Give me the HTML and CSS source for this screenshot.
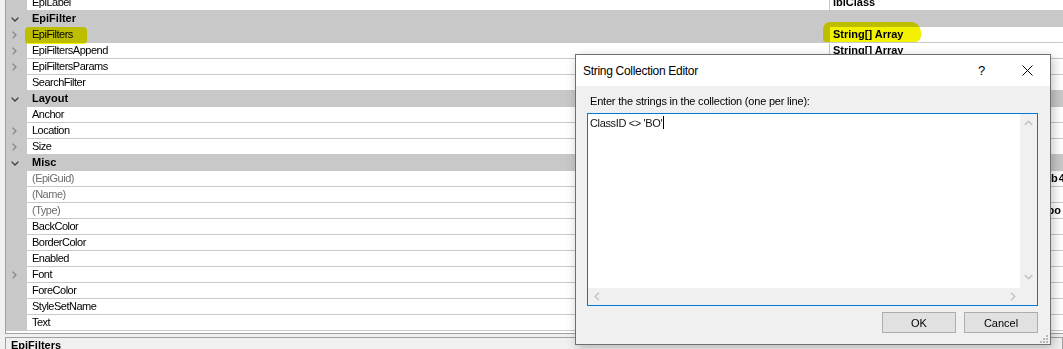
FILE: index.html
```html
<!DOCTYPE html>
<html lang="en">
<head>
    <meta charset="UTF-8">
    <meta name="viewport" content="width=device-width, initial-scale=1.0">
    <link rel="stylesheet" href="styles.css">
</head>
<body>
    <div class="props">
        <div class="grid">
            <div class="row"><div class="mg"></div><div class="name">EpiLabel</div><div class="val">lblClass</div></div>
            <div class="row cat"><div class="mg"><svg class="down" width="8" height="5" viewBox="0 0 8 5"><path d="M0.6 0.6 L4 4 L7.4 0.6"/></svg></div><div class="name">EpiFilter</div></div>
            <div class="row sel"><div class="mg"><svg class="right" width="5" height="8" viewBox="0 0 5 8"><path d="M0.6 0.6 L4 4 L0.6 7.4"/></svg></div><div class="name">EpiFilters</div><div class="val">String[] Array</div></div>
            <div class="row"><div class="mg"><svg class="right" width="5" height="8" viewBox="0 0 5 8"><path d="M0.6 0.6 L4 4 L0.6 7.4"/></svg></div><div class="name">EpiFiltersAppend</div><div class="val">String[] Array</div></div>
            <div class="row"><div class="mg"><svg class="right" width="5" height="8" viewBox="0 0 5 8"><path d="M0.6 0.6 L4 4 L0.6 7.4"/></svg></div><div class="name">EpiFiltersParams</div><div class="val">String[] Array</div></div>
            <div class="row"><div class="mg"></div><div class="name">SearchFilter</div><div class="val"></div></div>
            <div class="row cat"><div class="mg"><svg class="down" width="8" height="5" viewBox="0 0 8 5"><path d="M0.6 0.6 L4 4 L7.4 0.6"/></svg></div><div class="name">Layout</div></div>
            <div class="row"><div class="mg"></div><div class="name">Anchor</div><div class="val">Top, Left</div></div>
            <div class="row"><div class="mg"><svg class="right" width="5" height="8" viewBox="0 0 5 8"><path d="M0.6 0.6 L4 4 L0.6 7.4"/></svg></div><div class="name">Location</div><div class="val">12, 40</div></div>
            <div class="row"><div class="mg"><svg class="right" width="5" height="8" viewBox="0 0 5 8"><path d="M0.6 0.6 L4 4 L0.6 7.4"/></svg></div><div class="name">Size</div><div class="val">120, 20</div></div>
            <div class="row cat"><div class="mg"><svg class="down" width="8" height="5" viewBox="0 0 8 5"><path d="M0.6 0.6 L4 4 L7.4 0.6"/></svg></div><div class="name">Misc</div></div>
            <div class="row ro"><div class="mg"></div><div class="name">(EpiGuid)</div><div class="val guid">6c1e93a7-20fd-4e58-9a3c-d71f05a2eb4c</div></div>
            <div class="row ro"><div class="mg"></div><div class="name">(Name)</div><div class="val">cboClassID</div></div>
            <div class="row ro"><div class="mg"></div><div class="name">(Type)</div><div class="val">Ice.Lib.Framework.Controls.EpiUltraCombo</div></div>
            <div class="row"><div class="mg"></div><div class="name">BackColor</div><div class="val"></div></div>
            <div class="row"><div class="mg"></div><div class="name">BorderColor</div><div class="val"></div></div>
            <div class="row"><div class="mg"></div><div class="name">Enabled</div><div class="val"></div></div>
            <div class="row"><div class="mg"><svg class="right" width="5" height="8" viewBox="0 0 5 8"><path d="M0.6 0.6 L4 4 L0.6 7.4"/></svg></div><div class="name">Font</div><div class="val"></div></div>
            <div class="row"><div class="mg"></div><div class="name">ForeColor</div><div class="val"></div></div>
            <div class="row"><div class="mg"></div><div class="name">StyleSetName</div><div class="val"></div></div>
            <div class="row"><div class="mg"></div><div class="name">Text</div><div class="val"></div></div>
        </div>
        <div class="desc">EpiFilters</div>
    </div>

    <!-- marker strokes drawn over the screenshot -->
    <span class="mark mark-name"></span>
    <span class="mark mark-val"></span>

    <div class="dlg">
        <div class="dlg-title">
            <span class="dlg-caption">String Collection Editor</span>
            <span class="dlg-help">?</span>
            <svg class="dlg-close" width="11" height="11" viewBox="0 0 11 11"><path d="M0.5 0.5 L10.5 10.5 M10.5 0.5 L0.5 10.5"/></svg>
        </div>
        <div class="dlg-body">
            <div class="dlg-label">Enter the strings in the collection (one per line):</div>
            <div class="editor">
                <div class="editor-main">
                    <div class="editor-text">ClassID &lt;&gt; 'BO'<span class="caret"></span></div>
                    <div class="vscroll">
                        <svg width="9" height="6" viewBox="0 0 9 6"><path d="M0.7 5 L4.5 1.2 L8.3 5"/></svg>
                        <svg width="9" height="6" viewBox="0 0 9 6"><path d="M0.7 1 L4.5 4.8 L8.3 1"/></svg>
                    </div>
                </div>
                <div class="hscroll">
                    <svg width="6" height="9" viewBox="0 0 6 9"><path d="M5 0.7 L1.2 4.5 L5 8.3"/></svg>
                    <span class="track"></span>
                    <svg width="6" height="9" viewBox="0 0 6 9"><path d="M1 0.7 L4.8 4.5 L1 8.3"/></svg>
                    <span class="corner"></span>
                </div>
            </div>
            <div class="dlg-buttons">
                <button class="btn">OK</button>
                <button class="btn">Cancel</button>
            </div>
        </div>
        <svg class="grip" width="8" height="8" viewBox="0 0 8 8">
            <rect x="6" y="0" width="2" height="2"/><rect x="3" y="3" width="2" height="2"/><rect x="6" y="3" width="2" height="2"/>
            <rect x="0" y="6" width="2" height="2"/><rect x="3" y="6" width="2" height="2"/><rect x="6" y="6" width="2" height="2"/>
        </svg>
    </div>
</body>
</html>
```

FILE: styles.css
```css
* {
    box-sizing: border-box;
}
body {
    margin: 0;
    height: 349px;
    overflow: hidden;
    position: relative;
    background: #f0f0f0;
    font-family: "Liberation Sans", Arial, sans-serif;
    font-size: 11px;
    color: #000;
}

/* property grid */
.props {
    padding-left: 5px;
}
.grid {
    margin-top: -5px;
    padding-bottom: 2px;
    background: #fff;
    border-left: 1px solid #a0a0a0;
    border-bottom: 1px solid #a0a0a0;
}
.row {
    display: flex;
    height: 16px;
}
.mg {
    flex: 0 0 21px;
    display: flex;
    align-items: center;
    padding-left: 6px;
    background: #c8c8c8;
}
.mg svg {
    fill: none;
    stroke-width: 1.3;
}
.mg .down {
    margin-left: -1px;
    stroke: #3c3c3c;
}
.mg .right {
    stroke: #858585;
}
.name {
    flex: 0 0 803px;
    padding-left: 5px;
    line-height: 15px;
    letter-spacing: -0.5px;
    white-space: nowrap;
    border-right: 1px solid #c8c8c8;
    border-bottom: 1px solid #c8c8c8;
}
.val {
    flex: 1;
    padding-left: 3px;
    line-height: 15px;
    font-weight: bold;
    white-space: nowrap;
    overflow: hidden;
    border-bottom: 1px solid #c8c8c8;
}
.guid {
    letter-spacing: 0.9px;
}
.cat .name {
    flex: 1;
    font-weight: bold;
    letter-spacing: 0;
    background: #c8c8c8;
    border: none;
}
.sel .name {
    background: #c8c8c8;
}
.ro .name {
    color: #6d6d6d;
}
.desc {
    margin-top: 3px;
    height: 40px;
    padding: 1px 5px;
    line-height: 12px;
    font-weight: bold;
    border: 1px solid #a0a0a0;
}

/* highlighter strokes */
.mark {
    position: absolute;
    background: #f2f200;
    mix-blend-mode: multiply;
    filter: blur(0.7px);
}
.mark-name {
    left: 25px;
    top: 27px;
    width: 62px;
    height: 17px;
    border-radius: 4px;
}
.mark-val {
    left: 823px;
    top: 22px;
    width: 98px;
    height: 20px;
    border-radius: 7px 10px 6px 3px;
}

/* string collection editor */
.dlg {
    position: absolute;
    left: 575px;
    top: 54px;
    width: 476px;
    height: 291px;
    border: 1px solid #6f6f6f;
    background: #f0f0f0;
    box-shadow: 2px 3px 10px rgba(0, 0, 0, 0.25);
}
.dlg-title {
    display: flex;
    align-items: center;
    height: 31px;
    padding: 0 17px 0 7px;
    background: #fff;
    font-size: 12px;
    letter-spacing: -0.3px;
}
.dlg-caption {
    flex: 1;
}
.dlg-help {
    margin-right: 37px;
    font-size: 13px;
}
.dlg-close {
    fill: none;
    stroke: #000;
    stroke-width: 1;
}
.dlg-body {
    display: flex;
    flex-direction: column;
    padding: 9px 12px 11px 11px;
}
.dlg-label {
    height: 13px;
    line-height: 13px;
    padding-left: 3px;
    letter-spacing: -0.2px;
}
.editor {
    display: flex;
    flex-direction: column;
    height: 193px;
    margin-top: 5px;
    border: 1px solid #0078d7;
    background: #f0f0f0;
}
.editor-main {
    flex: 1;
    display: flex;
}
.editor-text {
    flex: 1;
    padding: 2px 0 0 2px;
    line-height: 14px;
    letter-spacing: -0.35px;
    color: #111;
    background: #fff;
}
.caret {
    display: inline-block;
    width: 1px;
    height: 13px;
    margin-left: 1px;
    vertical-align: -2px;
    background: #000;
}
.vscroll {
    flex: 0 0 17px;
    display: flex;
    flex-direction: column;
    justify-content: space-between;
    align-items: center;
    padding: 6px 0 8px;
}
.hscroll {
    display: flex;
    align-items: center;
    height: 17px;
    padding-left: 6px;
}
.hscroll .track {
    flex: 1;
}
.vscroll svg,
.hscroll svg {
    fill: none;
    stroke: #c2c2c2;
    stroke-width: 1.4;
}
.corner {
    width: 17px;
    height: 17px;
    margin-left: 4px;
}
.dlg-buttons {
    display: flex;
    justify-content: flex-end;
    gap: 8px;
    margin-top: 6px;
}
.btn {
    width: 74px;
    height: 21px;
    padding: 0;
    font-family: "Liberation Sans", Arial, sans-serif;
    font-size: 11px;
    color: #000;
    background: #e1e1e1;
    border: 1px solid #adadad;
}
.grip {
    position: absolute;
    right: 2px;
    bottom: 1px;
    fill: #b8b8b8;
}
```
